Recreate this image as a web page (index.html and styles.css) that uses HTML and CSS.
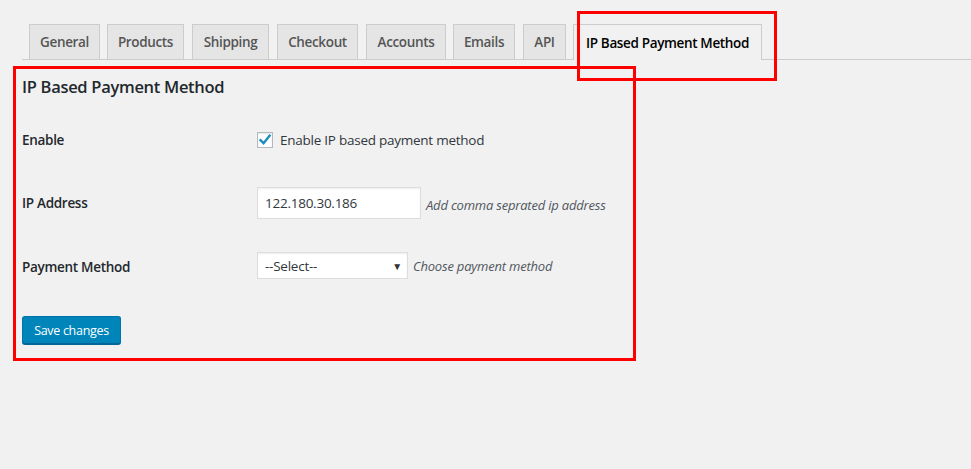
FILE: index.html
```html
<!DOCTYPE html>
<html>
<head>
<meta charset="utf-8">
<link rel="stylesheet" href="styles.css">
</head>
<body>
<div class="wrap">
  <nav class="tabs">
    <a class="tab">General</a>
    <a class="tab">Products</a>
    <a class="tab">Shipping</a>
    <a class="tab">Checkout</a>
    <a class="tab">Accounts</a>
    <a class="tab">Emails</a>
    <a class="tab">API</a>
    <a class="tab active">IP Based Payment Method</a>
  </nav>
  <h2 class="title">IP Based Payment Method</h2>
  <div class="form">
    <div class="row row-enable">
      <div class="label">Enable</div>
      <div class="field">
        <label class="check">
          <span class="box"><svg width="14" height="14" viewBox="0 0 14 14"><path d="M2.5 7.2 L5.6 10.2 L11.6 2.8" fill="none" stroke="#1e8cbe" stroke-width="2.4" stroke-linecap="square"/></svg></span>
          <span>Enable IP based payment method</span>
        </label>
      </div>
    </div>
    <div class="row row-ip">
      <div class="label">IP Address</div>
      <div class="field">
        <div class="input">122.180.30.186</div>
        <span class="desc desc-ip">Add comma seprated ip address</span>
      </div>
    </div>
    <div class="row row-pay">
      <div class="label">Payment Method</div>
      <div class="field field-pay">
        <div class="select">--Select--<span class="arrow">&#9660;</span></div>
        <span class="desc">Choose payment method</span>
      </div>
    </div>
  </div>
  <button class="btn">Save changes</button>
</div>
<div class="mark mark-form"></div>
<div class="mark mark-tab"></div>
</body>
</html>
```
FILE: styles.css
```css
* { box-sizing: border-box; }
html, body { margin: 0; padding: 0; }
body {
  background: #f1f1f1;
  font-family: "Open Sans", "Noto Sans", sans-serif;
  color: #23282d;
  width: 971px;
  height: 469px;
  overflow: hidden;
  position: relative;
}
.wrap { padding-left: 22px; }
.tabs {
  display: flex;
  padding-top: 24px;
  padding-left: 7px;
  border-bottom: 1px solid #ccc;
  height: 60px;
}
.tab {
  height: 35px;
  margin-right: 7px;
  padding: 0 9px;
  border: 1px solid #ccc;
  border-bottom: none;
  background: #e5e5e5;
  color: #555;
  font-size: 13.5px;
  font-weight: 600;
  letter-spacing: -0.35px;
  display: flex;
  align-items: center;
  justify-content: center;
}
.tab:nth-child(1) { width: 71px; }
.tab:nth-child(2) { width: 77px; margin-right: 8px; }
.tab:nth-child(3) { width: 77px; margin-right: 8px; }
.tab:nth-child(4) { width: 81px; margin-right: 8px; }
.tab:nth-child(5) { width: 80px; }
.tab:nth-child(6) { width: 62px; margin-right: 8px; }
.tab:nth-child(7) { width: 43px; }
.tab.active {
  width: 189px;
  background: #f1f1f1;
  color: #000;
  height: 36px;
  margin-bottom: -1px;
}
.title {
  margin: 15px 0 0;
  font-size: 16.5px;
  font-weight: 600;
  line-height: 24px;
  letter-spacing: -0.3px;
}
.form { margin-top: 0; }
.row {
  display: flex;
  align-items: center;
}
.row-enable { height: 62px; margin-top: 10px; }
.row-ip { height: 64px; }
.row-pay { height: 64px; }
.label {
  width: 235px;
  font-size: 13.5px;
  font-weight: 600;
  letter-spacing: -0.3px;
}
.field {
  display: flex;
  align-items: center;
  font-size: 13.5px;
  letter-spacing: -0.25px;
}
.field-pay { margin-top: -3px; }
.check { display: flex; align-items: center; color: #32373c; }
.box {
  width: 16px;
  height: 16px;
  border: 1px solid #b4b9be;
  background: #fff;
  margin-right: 7px;
  display: flex;
  align-items: center;
  justify-content: center;
  box-shadow: inset 0 1px 2px rgba(0,0,0,.1);
}
.input {
  width: 164px;
  height: 32px;
  border: 1px solid #ddd;
  background: #fff;
  box-shadow: inset 0 1px 2px rgba(0,0,0,.07);
  padding: 0 7px;
  display: flex;
  align-items: center;
  color: #32373c;
}
.select {
  position: relative;
  width: 151px;
  height: 27px;
  border: 1px solid #ddd;
  background: #fff;
  box-shadow: inset 0 1px 2px rgba(0,0,0,.07);
  padding: 0 7px;
  display: flex;
  align-items: center;
  color: #32373c;
}
.arrow {
  position: absolute;
  right: 5px;
  top: 6px;
  font-size: 10px;
  color: #333;
}
.desc {
  font-style: italic;
  color: #50575e;
  font-size: 13px;
  letter-spacing: -0.2px;
  margin-left: 5px;
}
.desc-ip { margin-top: 3px; }
.btn {
  margin-top: 17px;
  width: 99px;
  height: 28px;
  background: #0085ba;
  border: 1px solid #0073aa;
  border-bottom-color: #006799;
  border-radius: 3px;
  box-shadow: 0 1px 0 #006799;
  color: #fff;
  font-family: "Open Sans", sans-serif;
  font-size: 12.5px;
  letter-spacing: -0.3px;
  padding: 0;
}
.mark {
  position: absolute;
  border: 3px solid #f00;
}
.mark-form { left: 13px; top: 66px; width: 623px; height: 295px; }
.mark-tab { left: 577px; top: 11px; width: 200px; height: 70px; }
```
